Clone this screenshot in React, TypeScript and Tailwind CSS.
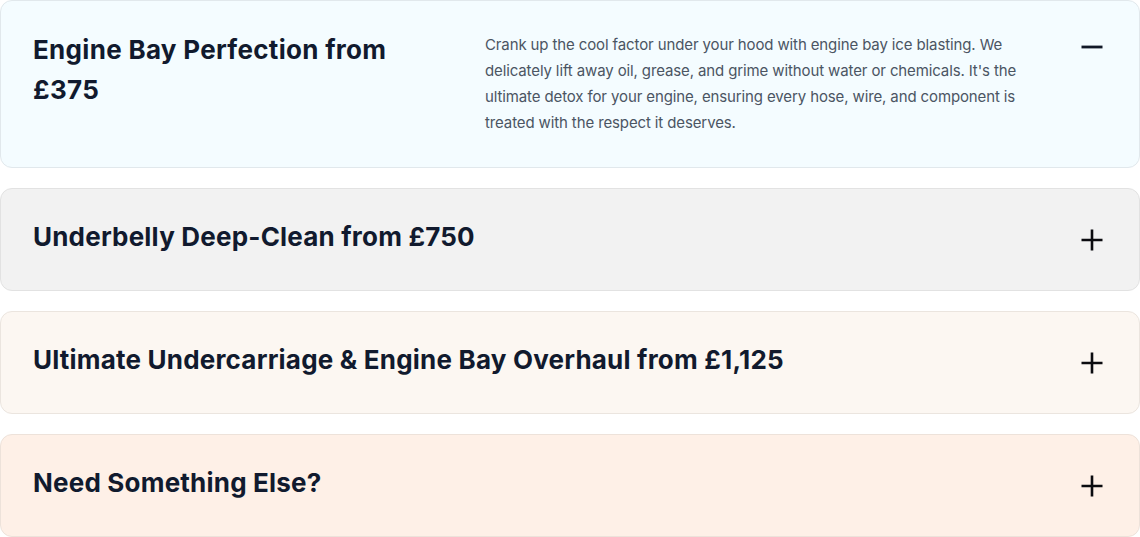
import React from 'react';

interface Service {
  title: string;
  description?: string;
  bg: string;
  border: string;
}

const services: Service[] = [
  {
    title: 'Engine Bay Perfection from £375',
    description:
      "Crank up the cool factor under your hood with engine bay ice blasting. We delicately lift away oil, grease, and grime without water or chemicals. It's the ultimate detox for your engine, ensuring every hose, wire, and component is treated with the respect it deserves.",
    bg: 'bg-[#f4fcff]',
    border: 'border-[#e1e8ec]',
  },
  {
    title: 'Underbelly Deep-Clean from £750',
    bg: 'bg-[#f2f2f2]',
    border: 'border-[#e2e2e2]',
  },
  {
    title: 'Ultimate Undercarriage & Engine Bay Overhaul from £1,125',
    bg: 'bg-[#fcf7f2]',
    border: 'border-[#ebe5df]',
  },
  {
    title: 'Need Something Else?',
    bg: 'bg-[#fef0e7]',
    border: 'border-[#ede2da]',
  },
];

const PlusIcon = () => (
  <svg width="24" height="24" viewBox="0 0 24 24" className="shrink-0 text-[#0b0b0f]">
    <path d="M12 1.5v21M1.5 12h21" stroke="currentColor" strokeWidth="2.6" />
  </svg>
);

const MinusIcon = () => (
  <svg width="24" height="24" viewBox="0 0 24 24" className="shrink-0 text-[#111827]">
    <path d="M1.5 12h21" stroke="currentColor" strokeWidth="2.8" />
  </svg>
);

const ServiceCard: React.FC<{ service: Service; open: boolean }> = ({ service, open }) => {
  if (open) {
    return (
      <div className={`flex items-start rounded-xl border ${service.border} ${service.bg} pl-8 pr-[35px] pt-[29px] pb-[31px]`}>
        <h3 className="w-[400px] shrink-0 text-[26px] leading-[40px] font-bold tracking-[0.3px] text-[#111a2e]">
          {service.title}
        </h3>
        <p className="ml-[52px] mt-[2px] w-[563px] text-[15px] leading-[26px] tracking-[-0.12px] text-[#4b5563]">
          {service.description}
        </p>
        <div className="ml-auto mt-[5px]">
          <MinusIcon />
        </div>
      </div>
    );
  }
  return (
    <div className={`flex items-center justify-between rounded-xl border ${service.border} ${service.bg} pl-8 pr-[35px] py-[28px]`}>
      <h3 className="pb-[5px] text-[26px] leading-[40px] font-bold tracking-[0.2px] text-[#111a2e]">{service.title}</h3>
      <PlusIcon />
    </div>
  );
};

export default function App() {
  return (
    <div className="flex w-[1140px] flex-col gap-5 bg-white font-['Inter',sans-serif]">
      {services.map((s, i) => (
        <ServiceCard key={s.title} service={s} open={i === 0} />
      ))}
    </div>
  );
}
